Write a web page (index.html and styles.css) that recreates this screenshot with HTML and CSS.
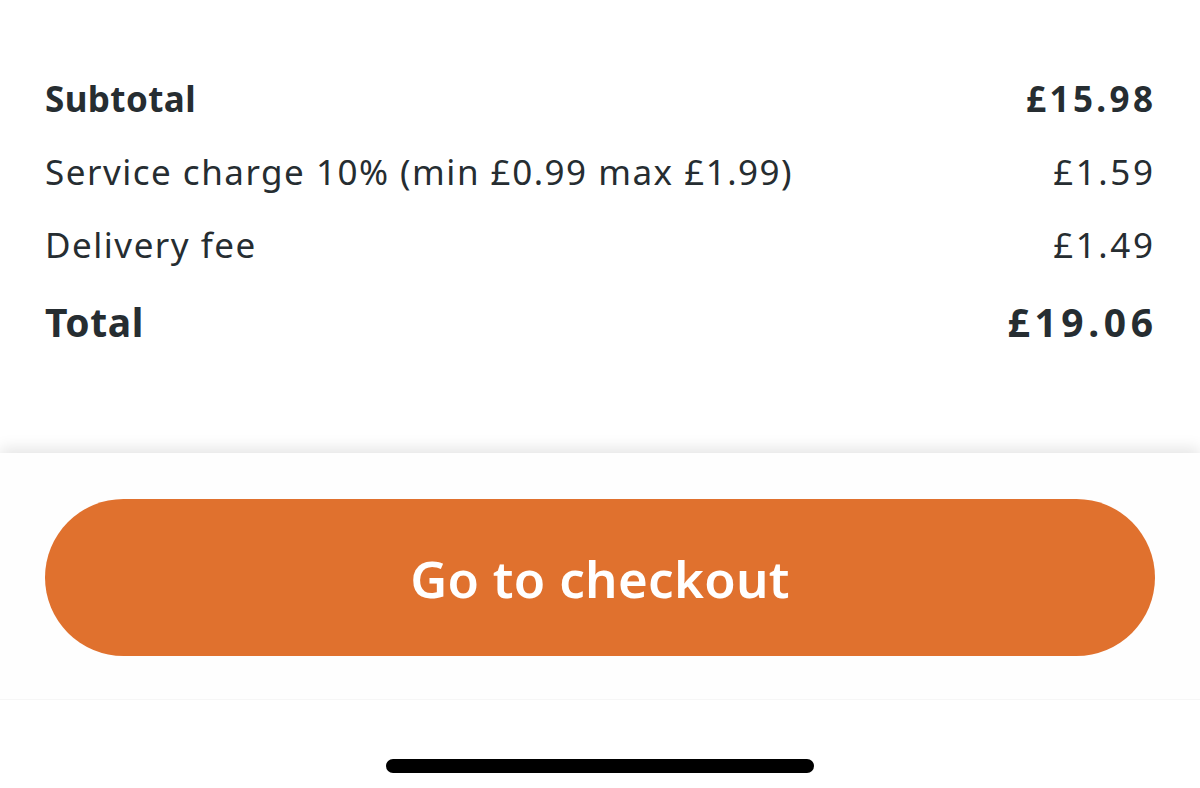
FILE: index.html
```html
<!DOCTYPE html>
<html lang="en">
<head>
<meta charset="utf-8">
<title>Basket summary</title>
<link rel="stylesheet" href="styles.css">
</head>
<body>
<div class="screen">
  <section class="summary">
    <div class="row strong"><span class="label">Subtotal</span><span class="price">£15.98</span></div>
    <div class="row"><span class="label">Service charge 10% (min £0.99 max £1.99)</span><span class="price">£1.59</span></div>
    <div class="row"><span class="label">Delivery fee</span><span class="price">£1.49</span></div>
    <div class="row strong total"><span class="label">Total</span><span class="price">£19.06</span></div>
  </section>
  <footer class="footer">
    <div class="action">
      <button class="checkout" type="button">Go to checkout</button>
    </div>
    <div class="home-area"><div class="home-indicator"></div></div>
  </footer>
</div>
</body>
</html>
```
FILE: styles.css
```css
html, body {
  margin: 0;
  padding: 0;
  background: #ffffff;
}
.screen {
  width: 1200px;
  height: 788px;
  overflow: hidden;
  display: flex;
  flex-direction: column;
  font-family: "Noto Sans", "Open Sans", sans-serif;
  color: #262d31;
}
.summary {
  height: 453px;
  box-sizing: border-box;
  padding: 62px 47px 0 45px;
  display: flex;
  flex-direction: column;
}
.row {
  display: flex;
  justify-content: space-between;
  align-items: center;
  height: 73px;
  font-size: 35px;
  font-weight: 400;
}
.row .label {
  letter-spacing: 1.5px;
}
.row .price {
  letter-spacing: 2.6px;
  margin-right: -2.6px;
}
.row.strong {
  font-weight: 700;
}
.row.strong .label {
  letter-spacing: 0.4px;
}
.row.strong .price {
  letter-spacing: 3.4px;
  margin-right: -3.4px;
}
.row.total {
  font-size: 39px;
  margin-top: 4px;
}
.row.total .label {
  letter-spacing: 0.6px;
}
.row.total .price {
  letter-spacing: 4.6px;
  margin-right: -4.6px;
}
.footer {
  position: relative;
  flex: 1;
  display: flex;
  flex-direction: column;
  background: #ffffff;
  box-shadow: 0 -5px 14px rgba(0, 0, 0, 0.1);
}
.action {
  padding: 46px 45px 0 45px;
  height: 247px;
  box-sizing: border-box;
  background: #fefefe;
  border-bottom: 1px solid #f6f6f6;
}
.checkout {
  width: 100%;
  height: 157px;
  border: none;
  border-radius: 79px;
  background: #e0712e;
  color: #ffffff;
  font-family: "Noto Sans", "Open Sans", sans-serif;
  font-size: 51px;
  font-weight: 600;
  letter-spacing: 0.3px;
  padding: 0;
  cursor: pointer;
}
.home-area {
  flex: 1;
  display: flex;
  justify-content: center;
  padding-top: 59px;
}
.home-indicator {
  width: 428px;
  height: 14px;
  border-radius: 7px;
  background: #000000;
}
```
